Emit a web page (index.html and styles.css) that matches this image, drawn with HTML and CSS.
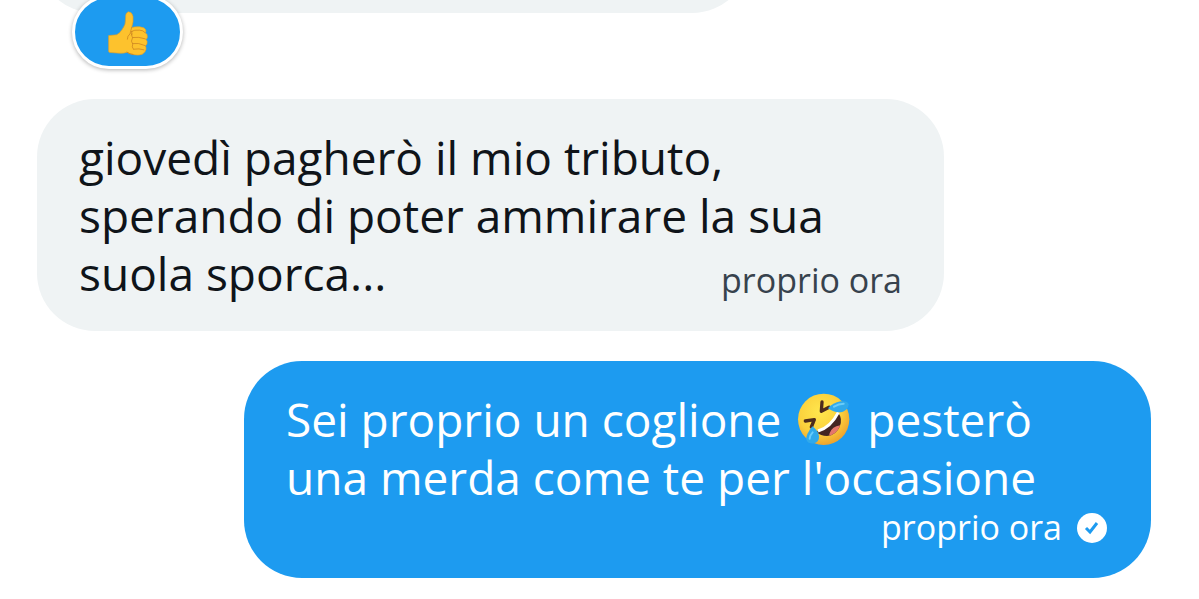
FILE: index.html
```
<!DOCTYPE html>
<html lang="it">
<head>
    <meta charset="UTF-8">
    <meta name="viewport" content="width=device-width, initial-scale=1.0">
    <title>Messaggi</title>
    <link rel="stylesheet" href="styles.css">
</head>
<body>
    <main class="chat">
        <div class="message received message-short">
            <button type="button" class="reaction" aria-label="Mi piace">
                <svg class="thumb" viewBox="144 30 126 140" aria-hidden="true">
                    <path d="M149 109 Q147 106 151 106 L173 104 Q183 99 190 87 Q201 75 200 53 Q199 37 209 35 Q219 36 222 49 Q224 63 218 82 Q228 79 242 80 Q258 82 260 89 Q262 94 259 98 Q266 102 265 110 Q265 115 261 118 Q266 123 264 130 Q263 135 259 137 Q262 142 261 148 Q259 157 250 162 Q238 167 222 163 Q212 162 204 156 Q195 160 183 159 L153 157 Q148 157 149 151 Z" fill="#fdc22d" stroke="#e7a021" stroke-width="2"/>
                    <path d="M218 82 L213 101 Q205 107 205 117 M217 94 Q226 88 242 90 Q252 90 258 97 M219 105 Q213 101 219 94 M220 112 Q239 109 259 116 M220 111 Q214 107 219 99 M221 130 Q238 127 258 136 M220 130 Q214 124 220 114 M224 147 Q240 144 255 149 M223 147 Q217 141 221 132 M204 156 Q212 162 222 163" fill="none" stroke="#c47a20" stroke-width="2" stroke-linecap="round"/>
                </svg>
            </button>
        </div>

        <div class="message received">
            <p class="text">giovedì pagherò il mio tributo,<br>sperando di poter ammirare la sua<br>suola sporca... <span class="time inline-time">proprio ora</span></p>
        </div>

        <div class="message sent">
            <p class="text">Sei proprio un coglione <svg class="emoji" viewBox="41 22 160 162" role="img" aria-label="Risata">
                    <defs>
                        <radialGradient id="face" cx="42%" cy="35%" r="65%">
                            <stop offset="0" stop-color="#ffe64d"/>
                            <stop offset="0.65" stop-color="#fbd03c"/>
                            <stop offset="1" stop-color="#efa52e"/>
                        </radialGradient>
                        <clipPath id="mouth">
                            <path d="M98 141 Q139 127 163 84 Q178 101 168 126 Q157 151 130 154 Q111 154 98 141 Z"/>
                        </clipPath>
                    </defs>
                    <circle cx="120" cy="104" r="77" fill="url(#face)"/>
                    <path d="M98 141 Q139 127 163 84 Q178 101 168 126 Q157 151 130 154 Q111 154 98 141 Z" fill="#432522"/>
                    <g clip-path="url(#mouth)">
                        <ellipse cx="160" cy="143" rx="26" ry="17" transform="rotate(-38 160 143)" fill="#e5766c"/>
                    </g>
                    <path d="M103 139 Q141 128 164 83" fill="none" stroke="#fff" stroke-width="9"/>
                    <path d="M115 52 L113 80 L136 68 M65 109 L92 105 L83 127" fill="none" stroke="#4d2b1c" stroke-width="10" stroke-linecap="round" stroke-linejoin="round"/>
                    <path d="M133 71 Q147 54 171 50 Q192 47 195 59 Q194 75 178 81 Q157 88 133 71 Z" fill="#30a9ea"/>
                    <path d="M151 66 Q165 57 180 57" fill="none" stroke="#68cdfb" stroke-width="6" stroke-linecap="round"/>
                    <path d="M86 125 Q103 137 106 154 Q107 171 92 176 Q74 179 68 165 Q66 150 86 125 Z" fill="#30a9ea"/>
                    <path d="M87 143 Q79 151 78 162" fill="none" stroke="#68cdfb" stroke-width="6" stroke-linecap="round"/>
                </svg> pesterò<br>una merda come te per l'occasione</p>
            <div class="meta">
                <span class="time">proprio ora</span>
                <svg class="check" viewBox="0 0 30 30" role="img" aria-label="Inviato">
                    <circle cx="15" cy="15" r="15" fill="#fff"/>
                    <path d="M9 15 L13 19 L20 10" fill="none" stroke="#1d9bf0" stroke-width="3"/>
                </svg>
            </div>
        </div>
    </main>
</body>
</html>
```
FILE: styles.css
```
* {
    margin: 0;
    padding: 0;
    box-sizing: border-box;
}

body {
    background: #fff;
    font-family: 'Open Sans', 'Noto Sans', sans-serif;
    overflow: hidden;
}

.chat {
    display: flex;
    flex-direction: column;
    justify-content: flex-end;
    gap: 30px;
    height: 100vh;
    padding: 0 48px 21px 37px;
}

.message {
    position: relative;
    flex-shrink: 0;
    width: calc(100% - 207px);
    padding: 29px 42px;
    border-radius: 58px;
}

.received {
    align-self: flex-start;
    background: #eff3f4;
    color: #0f1419;
}

.sent {
    align-self: flex-end;
    background: #1d9bf0;
    color: #fff;
}

/* leaves room under the bubble for the reaction */
.message-short {
    width: 64%;
    min-height: 116px;
    margin-bottom: 56px;
}

.text {
    font-size: 46px;
    line-height: 58px;
    white-space: nowrap;
}

.time {
    font-size: 34px;
    line-height: 43px;
}

.inline-time {
    float: right;
    padding-top: 15px;
    color: #37424d;
}

.meta {
    display: flex;
    justify-content: flex-end;
    align-items: center;
    gap: 15px;
    padding-right: 2px;
}

.check {
    width: 30px;
    height: 30px;
}

.emoji {
    width: 54px;
    height: 54px;
    margin: 0 4px;
    vertical-align: -9px;
}

.reaction {
    position: absolute;
    left: 35px;
    bottom: -56px;
    display: flex;
    justify-content: center;
    align-items: center;
    width: 111px;
    height: 74px;
    padding-top: 2px;
    border: 3px solid #fff;
    border-radius: 37px;
    background: #1d9bf0;
    box-shadow: 0 1px 4px rgba(0, 0, 0, 0.3);
    cursor: pointer;
}

.thumb {
    width: 42px;
    height: 47px;
}
```
